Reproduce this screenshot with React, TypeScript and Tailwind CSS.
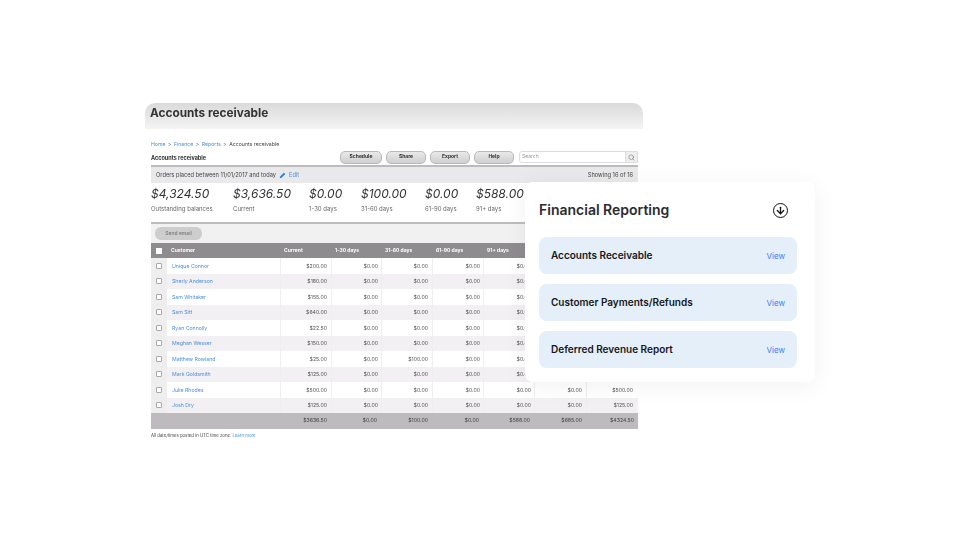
import { ArrowDown, Search } from "lucide-react";

const stats = [
  { value: "$4,324.50", label: "Outstanding balances", width: "w-[82px]" },
  { value: "$3,636.50", label: "Current", width: "w-[76px]" },
  { value: "$0.00", label: "1-30 days", width: "w-[52px]" },
  { value: "$100.00", label: "31-60 days", width: "w-[64px]" },
  { value: "$0.00", label: "61-90 days", width: "w-[51px]" },
  { value: "$588.00", label: "91+ days", width: "w-[60px]" },
];

const columns = ["Current", "1-30 days", "31-60 days", "61-90 days", "91+ days", "", ""];

const rows = [
  { name: "Unique Connor", current: "$200.00", mid: "$0.00", total: "" },
  { name: "Sherly Anderson", current: "$180.00", mid: "$0.00", total: "" },
  { name: "Sam Whitaker", current: "$155.00", mid: "$0.00", total: "" },
  { name: "Sam Sitt", current: "$640.00", mid: "$0.00", total: "" },
  { name: "Ryan Connolly", current: "$22.50", mid: "$0.00", total: "" },
  { name: "Meghan Wesser", current: "$150.00", mid: "$0.00", total: "" },
  { name: "Matthew Rowland", current: "$25.00", mid: "$100.00", total: "" },
  { name: "Mark Goldsmith", current: "$125.00", mid: "$0.00", total: "" },
  { name: "Julie Rhodes", current: "$500.00", mid: "$0.00", total: "$500.00" },
  { name: "Josh Dry", current: "$125.00", mid: "$0.00", total: "$125.00" },
];

const totals = ["$3636.50", "$0.00", "$100.00", "$0.00", "$588.00", "$685.00", "$4324.50"];
const reports = ["Accounts Receivable", "Customer Payments/Refunds", "Deferred Revenue Report"];
const gridCols = "grid grid-cols-[16px_113px_51px_50px_51px_51px_51px_52px_52px]";

const ToolButton = ({ label, width }: { label: string; width: string }) => (
  <button className={`${width} h-[13px] rounded-[5px] border border-[#b9b9b9] bg-gradient-to-b from-[#e9e9e9] to-[#cfcfcf] text-[5px] font-bold text-[#333]`}>
    {label}
  </button>
);

const Checkbox = () => <span className="block h-[6px] w-[6px] rounded-[1px] border border-[#aaa] bg-white" />;

const App = () => {
  return (
    <div className="relative h-[540px] w-[960px] overflow-hidden bg-white pl-[145px] pt-[103px] font-['Inter',sans-serif]">
      <div className="w-[498px] blur-[0.3px]">
        <div className="flex h-[26px] items-center rounded-t-[10px] bg-gradient-to-b from-[#dadada] to-[#f4f4f4] pb-[5px] pl-[5px] text-[11.8px] font-bold text-[#333]">
          Accounts receivable
        </div>

        <div className="w-[487px] pl-[6px] pt-[13px] box-content">
          <div className="flex h-[6px] items-center gap-[2.5px] text-[5.2px] text-[#444]">
            <span className="text-[#4a90d9]">Home</span>
            <span>&gt;</span>
            <span className="text-[#4a90d9]">Finance</span>
            <span>&gt;</span>
            <span className="text-[#4a90d9]">Reports</span>
            <span>&gt;</span>
            <span>Accounts receivable</span>
          </div>

          <div className="mt-[2px] flex h-[14px] items-center gap-[4px]">
            <span className="mr-auto pt-[2px] text-[5.5px] font-bold text-[#333]">Accounts receivable</span>
            <ToolButton label="Schedule" width="w-[42px]" />
            <ToolButton label="Share" width="w-[40px]" />
            <ToolButton label="Export" width="w-[40px]" />
            <ToolButton label="Help" width="w-[40px]" />
            <div className="ml-[1px] flex h-[12px] w-[119px] items-center rounded-l-[3px] border border-[#ddd] bg-white pl-[2px] text-[5px] text-[#999]">
              <span className="flex-1">Search</span>
              <span className="flex h-full w-[12px] items-center justify-center border-l border-[#ddd] bg-[#eee]">
                <Search size={7} className="text-[#777]" />
              </span>
            </div>
          </div>

          <div className="mt-[1px] flex h-[18px] items-center border-t-2 border-[#bcbcbc] bg-[#e9e8ea] px-[5px] text-[5.7px] text-[#444]">
            <span>Orders placed between 11/01/2017 and today</span>
            <svg viewBox="0 0 10 10" className="ml-[3px] h-[7px] w-[7px]">
              <path d="M1 9l1-3 5-5 2 2-5 5z" fill="#2b7fd4" />
            </svg>
            <span className="ml-[3px] text-[#4a90d9]">Edit</span>
            <span className="ml-auto">Showing 16 of 16</span>
          </div>

          <div className="flex h-[39px] pt-[3px]">
            {stats.map((s) => (
              <div key={s.label} className={s.width}>
                <div className="whitespace-nowrap text-[12px] leading-[16px] italic text-[#333]">{s.value}</div>
                <div className="mt-[3px] whitespace-nowrap text-[6px] leading-[8px] text-[#666]">{s.label}</div>
              </div>
            ))}
          </div>

          <div className="flex h-[21px] items-center border-t-2 border-[#bcbcbc] bg-[#f1f1f1] pl-[4px]">
            <button className="h-[13px] w-[47px] rounded-[6px] bg-[#cdcdcd] text-[5px] font-medium text-[#777]">Send email</button>
          </div>

          <div className={`${gridCols} h-[15px] items-center bg-[#8e8c8e] text-[5px] font-bold text-white`}>
            <span className="flex justify-center"><span className="block h-[6px] w-[6px] bg-white" /></span>
            <span className="pl-[4px]">Customer</span>
            {columns.map((c, i) => (
              <span key={i} className="pl-[4px]">{c}</span>
            ))}
          </div>

          {rows.map((r, i) => (
            <div key={r.name} className={`${gridCols} h-[15.5px] items-center text-[5.2px] text-[#555] ${i % 2 ? "bg-[#f2f0f2]" : "bg-white"}`}>
              <span className="flex h-full items-center justify-center bg-[#eeeeee]"><Checkbox /></span>
              <span className="pl-[5px] pt-[2px] text-[#4a90d9]">{r.name}</span>
              <span className="flex h-full items-center justify-end border-l border-[#eeeeee] pr-[4px] pt-[2px]">{r.current}</span>
              <span className="flex h-full items-center justify-end border-l border-[#eeeeee] pr-[3px] pt-[2px]">$0.00</span>
              <span className="flex h-full items-center justify-end border-l border-[#eeeeee] pr-[4px] pt-[2px]">{r.mid}</span>
              <span className="flex h-full items-center justify-end border-l border-[#eeeeee] pr-[3px] pt-[2px]">$0.00</span>
              <span className="flex h-full items-center justify-end border-l border-[#eeeeee] pr-[3px] pt-[2px]">$0.00</span>
              <span className="flex h-full items-center justify-end border-l border-[#eeeeee] pr-[4px] pt-[2px]">{r.total && "$0.00"}</span>
              <span className="flex h-full items-center justify-end border-l border-[#eeeeee] pr-[5px] pt-[2px]">{r.total}</span>
            </div>
          ))}

          <div className={`${gridCols} h-[16px] items-center bg-[#bdbbbd] text-[5.2px] text-[#444]`}>
            <span />
            <span />
            {totals.map((t, i) => (
              <span key={i} className="pr-[4px] text-right">{t}</span>
            ))}
          </div>

          <div className="mt-[3px] text-[4.3px] leading-[7px] text-[#444]">
            All date/times posted in UTC time zone. <span className="text-[#4a90d9]">Learn more</span>
          </div>
        </div>
      </div>

      <div className="absolute left-[525px] top-[182px] h-[200px] w-[290px] rounded-[8px] bg-white pl-[14px] pr-[18px] pt-[17px] shadow-[0_4px_24px_rgba(0,0,0,0.06)]">
        <div className="flex h-[20px] items-center justify-between pr-[9px]">
          <span className="text-[14px] font-semibold text-[#2b2b2f]">Financial Reporting</span>
          <span className="mt-[2px] flex h-[15px] w-[15px] items-center justify-center rounded-full border-[1.7px] border-[#111]">
            <ArrowDown size={11} strokeWidth={2.8} className="text-[#111]" />
          </span>
        </div>
        <div className="mt-[18px] flex flex-col gap-[10px]">
          {reports.map((r) => (
            <div key={r} className="flex h-[37px] items-center justify-between rounded-[8px] bg-[#e4eff9] px-[12px]">
              <span className="text-[10px] font-semibold text-[#15171c]">{r}</span>
              <span className="text-[8px] text-[#3d7ff2]">View</span>
            </div>
          ))}
        </div>
      </div>
    </div>
  );
};

export default App;
